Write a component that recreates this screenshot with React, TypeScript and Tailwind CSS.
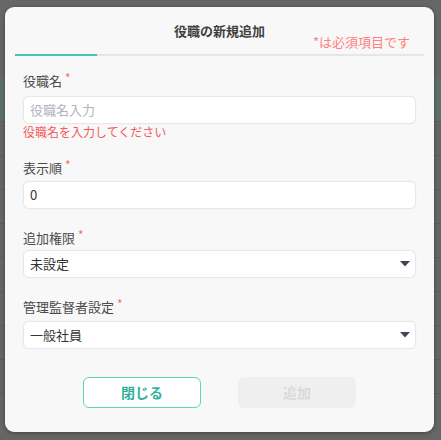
import React from 'react';

const font = { fontFamily: '"Noto Sans CJK JP", "Noto Sans", sans-serif' };

const Label = ({ text }: { text: string }) => (
  <div className="flex items-start text-[13px] leading-[18px] text-[#4a4a4a]">
    <span>{text}</span>
    <span className="ml-[3px] text-[12px] leading-[12px] text-[#ff6b6b]">*</span>
  </div>
);

const Caret = () => (
  <svg width="10" height="6" viewBox="0 0 10 6" className="shrink-0">
    <path d="M0 0 H10 L5 5.5 Z" fill="#3d4654" />
  </svg>
);

const App: React.FC = () => {
  return (
    <div className="relative h-[440px] w-[441px] overflow-hidden bg-[#666]" style={font}>
      {/* dimmed page behind */}
      <div className="flex flex-col pt-[78px]">
        <div className="h-[44px] border-b border-[#5e5e5e] bg-[#5f6f6c]" />
        {[0, 1, 2, 3, 4, 5, 6, 7].map((i) => (
          <div key={i} className="h-[34px] border-b border-[#5c5c5c]" />
        ))}
      </div>

      <div className="absolute left-[5px] top-[7px] w-[429px] rounded-[9px] bg-[#f8f8f8] px-[10px] pb-[24px] pt-[13px] shadow-[0_1px_4px_rgba(0,0,0,0.35)]">
        <div className="text-center text-[13px] font-bold leading-[22px] text-[#3f3f3f]">役職の新規追加</div>
        <div className="mt-[-9px] pr-[14px] text-right text-[13px] leading-[18px] text-[#ff8080]">*は必須項目です</div>
        <div className="mt-[3px] flex h-[2px] bg-[#e6e6e6]">
          <div className="w-[82px] bg-[#3ec8b3]" />
        </div>

        <div className="flex flex-col gap-[20px] px-[8px] pt-[16px]">
          <div className="flex flex-col">
            <Label text="役職名" />
            <div className="mt-[6px] flex h-[28px] items-center rounded-[6px] border border-[#e8e8e8] bg-white px-[6px] text-[13px] text-[#aeb4bc] shadow-[0_0_2px_rgba(0,0,0,0.06)]">
              役職名入力
            </div>
            <div className="text-[12px] leading-[15px] text-[#f25a5a]">役職名を入力してください</div>
          </div>

          <div className="flex flex-col">
            <Label text="表示順" />
            <div className="mt-[4px] flex h-[28px] items-center rounded-[6px] border border-[#e8e8e8] bg-white px-[6px] text-[13px] text-[#333] shadow-[0_0_2px_rgba(0,0,0,0.06)]">
              0
            </div>
          </div>

          <div className="flex flex-col">
            <Label text="追加権限" />
            <div className="mt-[3px] flex h-[28px] items-center justify-between rounded-[6px] border border-[#e8e8e8] bg-white pl-[6px] pr-[5px] text-[13px] text-[#333] shadow-[0_0_2px_rgba(0,0,0,0.06)]">
              <span>未設定</span>
              <Caret />
            </div>
          </div>

          <div className="flex flex-col">
            <Label text="管理監督者設定" />
            <div className="mt-[5px] flex h-[28px] items-center justify-between rounded-[6px] border border-[#e8e8e8] bg-white pl-[6px] pr-[5px] text-[13px] text-[#333] shadow-[0_0_2px_rgba(0,0,0,0.06)]">
              <span>一般社員</span>
              <Caret />
            </div>
          </div>
        </div>

        <div className="mt-[28px] flex justify-center gap-[37px]">
          <button className="flex h-[31px] w-[118px] items-center justify-center rounded-[6px] border border-[#5fd2c0] bg-white text-[14px] font-bold text-[#2fb29e]">
            閉じる
          </button>
          <button className="flex h-[31px] w-[118px] items-center justify-center rounded-[6px] bg-[#efefef] text-[14px] font-bold text-[#dadada]">
            追加
          </button>
        </div>
      </div>
    </div>
  );
};

export default App;
